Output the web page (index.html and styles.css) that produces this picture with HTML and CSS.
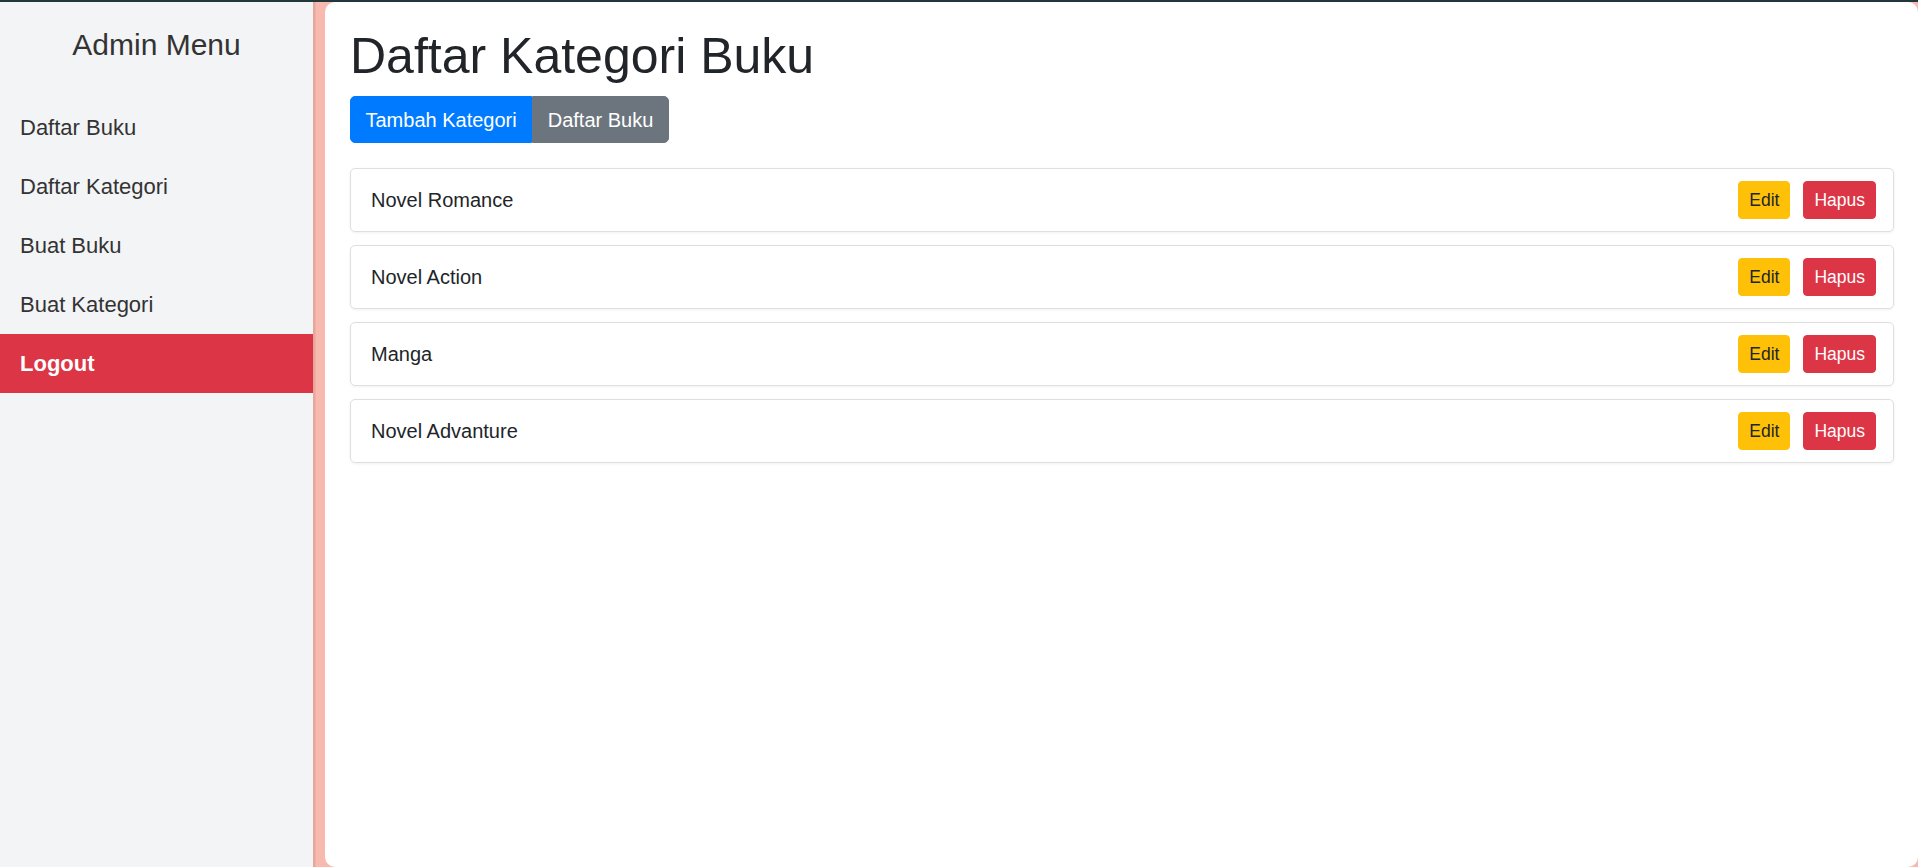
FILE: index.html
```html
<!DOCTYPE html>
<html lang="id">
<head>
<meta charset="utf-8">
<title>Daftar Kategori Buku</title>
<link rel="stylesheet" href="styles.css">
</head>
<body>
<div class="layout">
  <aside class="sidebar">
    <h4 class="sidebar-title">Admin Menu</h4>
    <nav class="menu">
      <a class="menu-link" href="#">Daftar Buku</a>
      <a class="menu-link" href="#">Daftar Kategori</a>
      <a class="menu-link" href="#">Buat Buku</a>
      <a class="menu-link" href="#">Buat Kategori</a>
      <a class="menu-link logout" href="#">Logout</a>
    </nav>
  </aside>
  <main class="panel">
    <h1 class="page-title">Daftar Kategori Buku</h1>
    <div class="btn-group">
      <a class="btn btn-primary" href="#">Tambah Kategori</a>
      <a class="btn btn-secondary" href="#">Daftar Buku</a>
    </div>
    <ul class="list">
      <li class="list-item"><span>Novel Romance</span><div class="actions"><a class="btn-sm btn-warning" href="#">Edit</a><a class="btn-sm btn-danger" href="#">Hapus</a></div></li>
      <li class="list-item"><span>Novel Action</span><div class="actions"><a class="btn-sm btn-warning" href="#">Edit</a><a class="btn-sm btn-danger" href="#">Hapus</a></div></li>
      <li class="list-item"><span>Manga</span><div class="actions"><a class="btn-sm btn-warning" href="#">Edit</a><a class="btn-sm btn-danger" href="#">Hapus</a></div></li>
      <li class="list-item"><span>Novel Advanture</span><div class="actions"><a class="btn-sm btn-warning" href="#">Edit</a><a class="btn-sm btn-danger" href="#">Hapus</a></div></li>
    </ul>
  </main>
</div>
</body>
</html>
```

FILE: styles.css
```css
* { box-sizing: border-box; }

html, body {
  margin: 0;
  height: 867px;
  overflow: hidden;
}

body {
  font-family: "Liberation Sans", Arial, sans-serif;
  color: #212529;
  border-top: 2px solid #22363c;
  background: #f8b9ae;
}

.layout {
  display: flex;
  height: 865px;
  background: linear-gradient(to right, #e8a79d 0, #e8a79d 315px, #f8b9ae 316px);
}

.sidebar {
  width: 313px;
  flex: none;
  background: #f3f4f6;
  padding-top: 25px;
}

.sidebar-title {
  margin: 0 0 35px;
  text-align: center;
  font-size: 30px;
  line-height: 36px;
  font-weight: 400;
  color: #333;
}

.menu {
  display: flex;
  flex-direction: column;
}

.menu-link {
  display: block;
  padding: 13px 20px;
  font-size: 22px;
  line-height: 33px;
  color: #333;
  text-decoration: none;
}

.menu-link.logout {
  background: #dc3545;
  color: #fff;
  font-weight: 700;
}

.panel {
  flex: 1;
  margin-left: 12px;
  background: #fff;
  border-radius: 10px;
  padding: 24px 24px 0 25px;
}

.page-title {
  margin: 0 0 10px;
  font-size: 50px;
  line-height: 60px;
  font-weight: 400;
  color: #212529;
}

.btn-group {
  display: inline-flex;
}

.btn {
  display: inline-block;
  font-size: 20px;
  line-height: 30px;
  padding: 7.5px 14.5px;
  border: 1px solid transparent;
  color: #fff;
  text-decoration: none;
}

.btn-primary {
  background: #007bff;
  border-color: #007bff;
  border-radius: 5px 0 0 5px;
}

.btn-secondary {
  background: #6c757d;
  border-color: #6c757d;
  border-radius: 0 5px 5px 0;
}

.list {
  list-style: none;
  margin: 25px 0 0;
  padding: 0;
  display: flex;
  flex-direction: column;
  gap: 13px;
}

.list-item {
  display: flex;
  align-items: center;
  justify-content: space-between;
  height: 64px;
  padding: 0 17px 0 16px;
  border: 1px solid #dfdfdf;
  border-radius: 5px;
  box-shadow: 0 1px 3px rgba(0, 0, 0, 0.06);
  font-size: 20px;
  color: #212529;
}

.list-item span {
  padding-left: 4px;
}

.actions {
  display: flex;
  gap: 13px;
}

.btn-sm {
  display: inline-block;
  font-size: 17.5px;
  line-height: 26px;
  padding: 5px 10px;
  border: 1px solid transparent;
  border-radius: 4px;
  text-decoration: none;
}

.btn-warning {
  background: #ffc107;
  border-color: #ffc107;
  color: #212529;
}

.btn-danger {
  background: #dc3545;
  border-color: #dc3545;
  color: #fff;
}
```
